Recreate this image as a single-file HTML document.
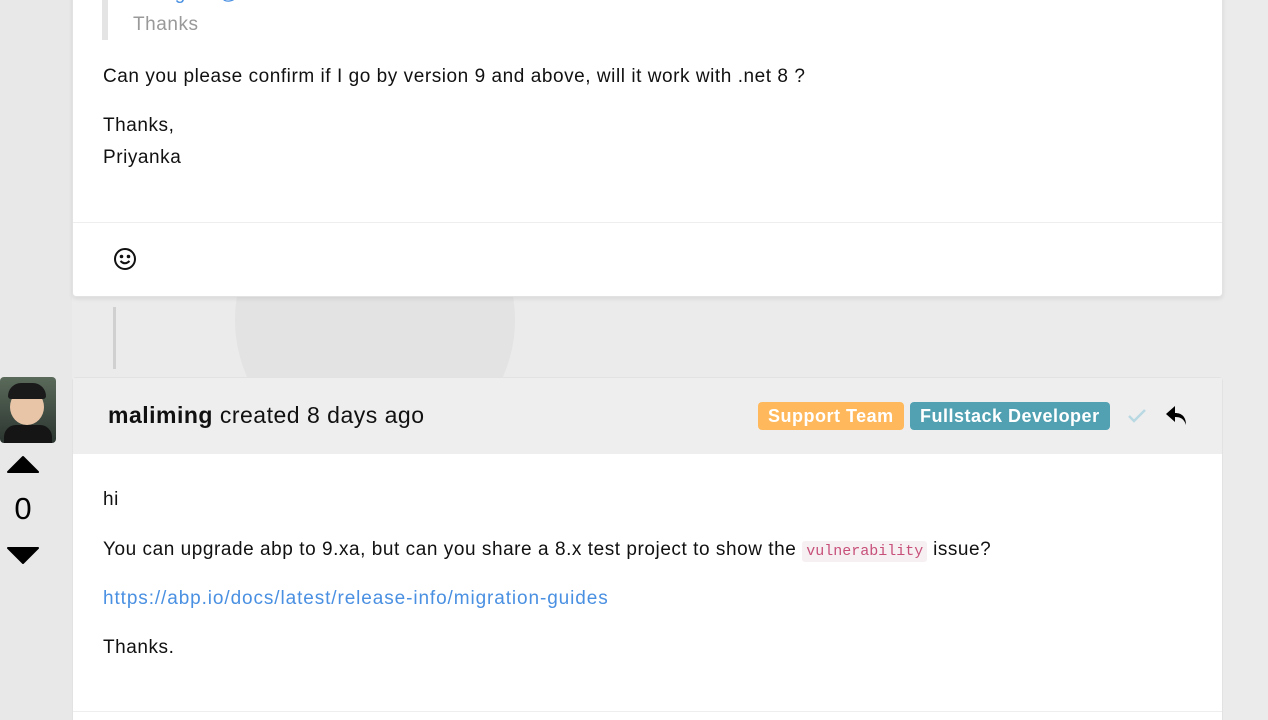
<!DOCTYPE html>
<html style="overflow:hidden;height:720px"><head><meta charset="utf-8"><style>
body{margin:0;width:1268px;height:720px;overflow:hidden;background:#ebebeb;font-family:"Liberation Sans",sans-serif;position:relative}
.bgc{position:absolute;border-radius:50%;background:#e3e3e3}
.card{position:absolute;left:72px;width:1151px;background:#fff;border:1px solid #e2e2e2;border-radius:4px;box-sizing:border-box}
p{margin:0;position:absolute;left:30px;font-size:19px;letter-spacing:.55px;color:#111;white-space:nowrap}
a{color:#4a90e2;text-decoration:none;letter-spacing:.9px}
.badge{position:absolute;top:24px;height:28px;padding:0 10px;line-height:28px;color:#fff;font-weight:bold;font-size:18px;letter-spacing:.5px;border-radius:4px}
</style></head><body>
<div style="position:absolute;left:0;top:0;width:72px;height:720px;background:#e8e8e8"></div>
<div class="bgc" style="left:235px;top:180px;width:280px;height:280px"></div>
<div class="card" style="top:-10px;height:307px;box-shadow:0 2px 4px rgba(0,0,0,.08)">
 <div style="position:absolute;left:29px;top:0;width:6px;height:49px;background:#e4e4e4"></div>
 <p style="left:60px;top:-8px;color:#4a90e2">liming.ma@volosoft.com</p>
 <p style="left:60px;top:23px;color:#999">Thanks</p>
 <p style="top:75px">Can you please confirm if I go by version 9 and above, will it work with .net 8 ?</p>
 <p style="top:124px">Thanks,</p>
 <p style="top:156px">Priyanka</p>
 <div style="position:absolute;left:0;right:0;top:231px;border-top:1px solid #eee"></div>
 <svg style="position:absolute;left:40px;top:256px" width="24" height="24" viewBox="0 0 24 24" fill="none" stroke="#111" stroke-width="2"><circle cx="12" cy="12" r="10"/><circle cx="8.5" cy="9.5" r=".8" fill="#111"/><circle cx="15.5" cy="9.5" r=".8" fill="#111"/><path d="M7.5 14q4.5 4.5 9 0"/></svg>
</div>
<div style="position:absolute;left:113px;top:307px;width:3px;height:62px;background:#d0d0d0"></div>
<div style="position:absolute;left:0;top:377px;width:56px;height:66px;border-radius:4px;overflow:hidden;background:linear-gradient(#5a6a5a,#2b3530)">
 <div style="position:absolute;left:10px;top:12px;width:34px;height:36px;border-radius:50%;background:#e9c5a8"></div>
 <div style="position:absolute;left:8px;top:6px;width:38px;height:16px;border-radius:18px 18px 4px 4px;background:#1a1a1a"></div>
 <div style="position:absolute;left:4px;top:48px;width:48px;height:18px;border-radius:12px 12px 0 0;background:#151515"></div>
</div>
<svg style="position:absolute;left:7px;top:455px" width="32" height="18"><path d="M1 17 L16 2 L31 17Z" fill="#000" stroke="#000" stroke-linejoin="round" stroke-width="2"/></svg>
<div style="position:absolute;left:0;width:46px;top:491px;text-align:center;font-size:31px">0</div>
<svg style="position:absolute;left:7px;top:547px" width="32" height="18"><path d="M1 1 L16 16 L31 1Z" fill="#000" stroke="#000" stroke-linejoin="round" stroke-width="2"/></svg>
<div class="card" style="top:377px;height:360px">
 <div style="position:absolute;left:0;right:0;top:0;height:76px;background:#eeeeee"></div>
 <div style="position:absolute;left:35px;top:24px;font-size:23px;letter-spacing:.5px;color:#111"><b>maliming</b> created 8 days ago</div>
 <div class="badge" style="left:685px;background:#ffb95c">Support Team</div>
 <div class="badge" style="left:837px;background:#51a1b3">Fullstack Developer</div>
 <svg style="position:absolute;left:1054px;top:30px" width="20" height="16"><path d="M2 8l5 5L18 2" stroke="#b8d8e2" stroke-width="2.5" fill="none"/></svg>
 <svg style="position:absolute;left:1092px;top:27px" width="24" height="22" viewBox="0 0 24 22"><path d="M10 1L1 9l9 8v-5c6 0 9 2 11 8 0-8-4-12-11-12z" fill="#000"/></svg>
 <p style="top:111px">hi</p>
 <p style="top:161px">You can upgrade abp to 9.xa, but can you share a 8.x test project to show the <span style="font-family:'Liberation Mono',monospace;font-size:15px;letter-spacing:0;color:#c7507a;background:#f7f0f2;padding:2px 4px;border-radius:3px">vulnerability</span> issue?</p>
 <p style="top:210px"><a>https://abp.io/docs/latest/release-info/migration-guides</a></p>
 <p style="top:259px">Thanks.</p>
 <div style="position:absolute;left:0;right:0;top:333px;border-top:1px solid #eee"></div>
</div>
</body></html>
